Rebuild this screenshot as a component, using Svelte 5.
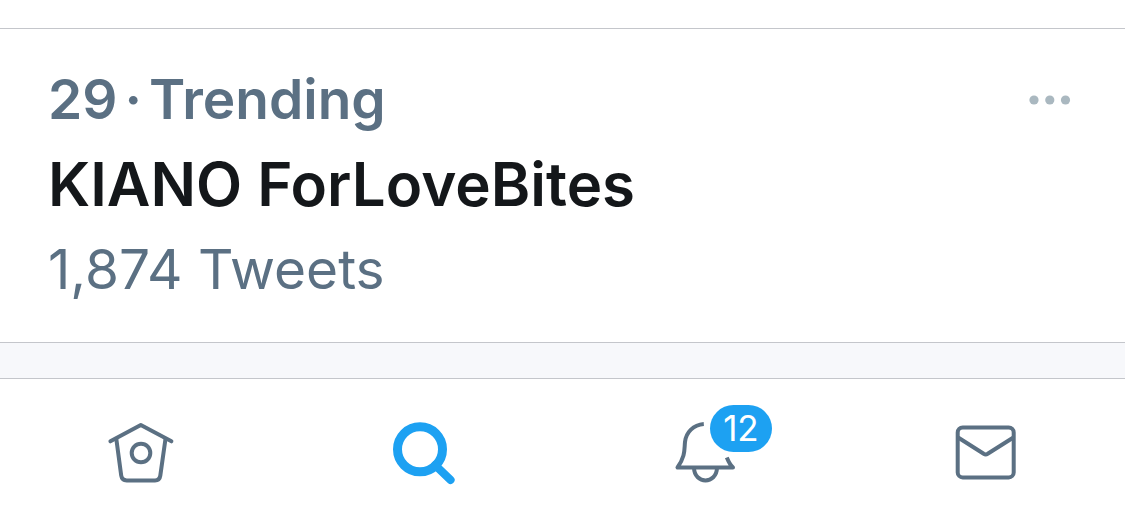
<script lang="ts">
    type Tab = {
        id: string;
        label: string;
        active?: boolean;
        badge?: number;
    };

    const trend = {
        rank: 29,
        context: "Trending",
        name: "KIANO ForLoveBites",
        tweets: 1874
    };

    const tabs: Tab[] = [
        { id: "home", label: "Home" },
        { id: "search", label: "Search", active: true },
        { id: "notifications", label: "Notifications", badge: 12 },
        { id: "messages", label: "Messages" }
    ];
</script>

<main>
    <article class="trend">
        <div class="trend-text">
            <p class="context">
                <span>{trend.rank}</span>
                <span>·</span>
                <span>{trend.context}</span>
            </p>
            <h2 class="name">{trend.name}</h2>
            <p class="count">{trend.tweets.toLocaleString("en-US")} Tweets</p>
        </div>
        <button class="more" aria-label="More options">
            <svg viewBox="0 0 42 10" width="42" height="10">
                <circle cx="5" cy="5" r="4.6" />
                <circle cx="20.8" cy="5" r="4.6" />
                <circle cx="36.5" cy="5" r="4.6" />
            </svg>
        </button>
    </article>
    <div class="divider"></div>
</main>

<nav class="tabs" aria-label="Primary">
    {#each tabs as tab}
        <a class="tab" class:active={tab.active} href="#{tab.id}" aria-label={tab.label}>
            <span class="icon">
                <svg viewBox="0 0 96 96" width="96" height="96">
                    {#if tab.id === "home"}
                        <path d="M17.4 36.3 L47.8 20 L78.4 36.3" />
                        <path d="M23.4 34.5 L28.2 70.6 Q28.9 75.4 33.7 75.4 H62 Q66.6 75.4 67.3 70.6 L72.4 34.5" />
                        <circle cx="48" cy="48" r="9.3" />
                    {:else if tab.id === "search"}
                        <circle cx="46" cy="44.3" r="22.5" stroke-width="9" />
                        <path d="M61 60 L76.6 75" stroke-width="8" />
                    {:else if tab.id === "notifications"}
                        <path class="butt" d="M48.8 19 C38.5 19.8 31 27.3 30 37 C29.2 44.5 30.6 51 22.5 62.5 H78 C74.8 59.5 73.6 56.8 71.8 52.4" />
                        <path class="butt" d="M39 63 C39.5 79.5 61.5 79.5 62 63" />
                    {:else}
                        <rect x="21.7" y="22.4" width="56" height="50" rx="5" />
                        <path d="M22.5 32.8 L47.7 48.8 Q49.7 50 51.7 48.8 L77 32.8" />
                    {/if}
                </svg>
                {#if tab.badge}
                    <span class="badge">{tab.badge}</span>
                {/if}
            </span>
        </a>
    {/each}
</nav>

<style>
    :global(body) {
        margin: 0;
        background: #fff;
        font-family: Inter, "Liberation Sans", sans-serif;
    }

    main {
        padding-top: 28px;
    }

    .trend {
        display: flex;
        justify-content: space-between;
        align-items: flex-start;
        padding: 28px 48px 30px;
        border-top: 1px solid #c4c6cb;
        border-bottom: 1px solid #c4c6cb;
    }

    .context,
    .name,
    .count {
        margin: 0;
        line-height: 85px;
        white-space: nowrap;
    }

    .context {
        display: flex;
        gap: 7px;
        color: #5b7083;
        font-size: 55px;
        font-weight: 600;
    }

    .name {
        color: #14171a;
        font-size: 60px;
        font-weight: 600;
    }

    .count {
        color: #5b7083;
        font-size: 55px;
        font-weight: 400;
    }

    .more {
        display: flex;
        padding: 38px 6px;
        border: 0;
        background: none;
        cursor: pointer;
    }

    .more svg {
        fill: #aab8c0;
    }

    .divider {
        height: 35px;
        background: #f7f8fb;
    }

    .tabs {
        display: grid;
        grid-template-columns: repeat(4, 1fr);
        padding: 26px 0;
        border-top: 1px solid #c4c6cb;
    }

    .tab {
        display: flex;
        justify-content: center;
        color: #5b7083;
        text-decoration: none;
    }

    .tab.active {
        color: #1da1f2;
    }

    .icon {
        position: relative;
        display: flex;
    }

    .icon svg {
        fill: none;
        stroke: currentColor;
        stroke-width: 4;
        stroke-linecap: round;
        stroke-linejoin: round;
    }

    .icon .butt {
        stroke-linecap: butt;
    }

    .badge {
        position: absolute;
        top: 0;
        left: 55px;
        padding: 0 13px;
        border-radius: 24px;
        background: #1da1f2;
        color: #fff;
        font-size: 35px;
        line-height: 47px;
    }
</style>
